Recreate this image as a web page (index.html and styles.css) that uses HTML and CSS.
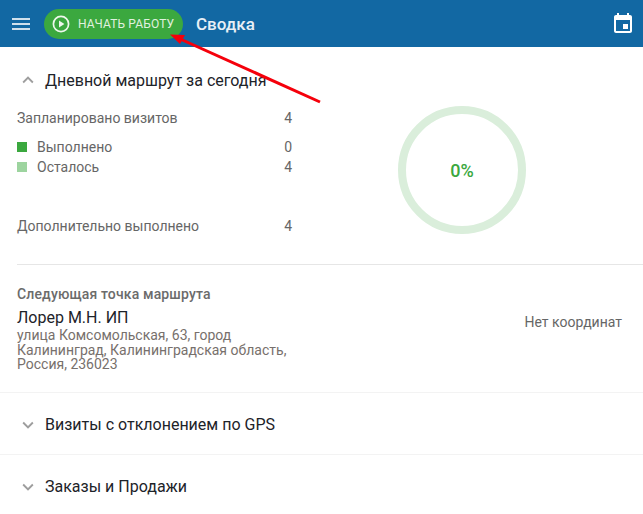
FILE: index.html
```html
<!DOCTYPE html>
<html lang="ru">
<head>
<meta charset="utf-8">
<title>Сводка</title>
<link rel="stylesheet" href="styles.css">
</head>
<body>
<header class="bar">
  <svg class="menu" width="24" height="24" viewBox="0 0 24 24"><path d="M3 6h18v2H3zM3 11h18v2H3zM3 16h18v2H3z" fill="#cfe0ec"/></svg>
  <div class="start">
    <svg width="20" height="20" viewBox="0 0 20 20"><circle cx="10" cy="10" r="7.6" fill="none" stroke="#eef7ec" stroke-width="1.7"/><path d="M8 6.4v7.2l5.4-3.6z" fill="#eef7ec"/></svg>
    <span>НАЧАТЬ РАБОТУ</span>
  </div>
  <h1>Сводка</h1>
  <svg class="cal" width="24" height="24" viewBox="0 0 24 24"><path fill="#fff" d="M19 3h-1V1h-2v2H8V1H6v2H5c-1.1 0-2 .9-2 2v14c0 1.1.9 2 2 2h14c1.1 0 2-.9 2-2V5c0-1.1-.9-2-2-2zm0 16H5V8h14v11z"/><path fill="#fff" d="M12 12h5v5h-5z"/></svg>
</header>
<main>
  <section class="daily">
    <div class="head first">
      <svg width="24" height="24" viewBox="0 0 24 24"><path d="M7.41 15.41 12 10.83l4.59 4.58L18 14l-6-6-6 6z" fill="#9e9e9e"/></svg>
      <h2>Дневной маршрут за сегодня</h2>
    </div>
    <div class="summary">
      <div class="stats">
        <div class="row"><span>Запланировано визитов</span><span>4</span></div>
        <div class="legend">
          <div class="row"><span class="key"><i class="sq done"></i>Выполнено</span><span>0</span></div>
          <div class="row"><span class="key"><i class="sq left"></i>Осталось</span><span>4</span></div>
        </div>
        <div class="row extra"><span>Дополнительно выполнено</span><span>4</span></div>
      </div>
      <div class="ring"><span>0%</span></div>
    </div>
    <div class="next">
      <h3>Следующая точка маршрута</h3>
      <div class="point">
        <div class="info">
          <div class="name">Лорер М.Н. ИП</div>
          <div class="addr">улица Комсомольская, 63, город Калининград, Калининградская область, Россия, 236023</div>
        </div>
        <div class="nocoord">Нет координат</div>
      </div>
    </div>
  </section>
  <section class="head fold">
    <svg width="24" height="24" viewBox="0 0 24 24"><path d="M7.41 8.59 12 13.17l4.59-4.58L18 10l-6 6-6-6z" fill="#9e9e9e"/></svg>
    <h2>Визиты с отклонением по GPS</h2>
  </section>
  <section class="head fold">
    <svg width="24" height="24" viewBox="0 0 24 24"><path d="M7.41 8.59 12 13.17l4.59-4.58L18 10l-6 6-6-6z" fill="#9e9e9e"/></svg>
    <h2>Заказы и Продажи</h2>
  </section>
</main>
<svg class="arrow" width="643" height="514" viewBox="0 0 643 514"><path d="M320 102 178 38" stroke="#f5000b" stroke-width="3" fill="none"/><path d="M170 34.500 185 35 180 44z" fill="#f5000b"/></svg>
</body>
</html>
```
FILE: styles.css
```css
* { box-sizing: border-box; }
html, body { margin: 0; height: 100%; overflow: hidden; }
body { font-family: Roboto, "Liberation Sans", sans-serif; background: #fff; color: #666; position: relative; }
.bar { height: 47px; background: #1268a3; display: flex; align-items: center; padding: 0 8px 0 9px; }
.menu { flex: none; }
.start { margin-left: 11px; width: 139px; height: 30px; border-radius: 15px; background: #3ba83f; display: flex; align-items: center; gap: 7px; padding-left: 7px; color: #e0f1df; font-size: 12px; letter-spacing: .15px; }
.bar h1 { margin: 0 0 0 13px; font-size: 17px; font-weight: 500; color: #e8f0f6; }
.cal { margin-left: auto; }
.head { display: flex; align-items: center; gap: 6px; padding-left: 17px; }
.head svg { flex: none; width: 22px; height: 22px; }
.head h2 { margin: 0; font-size: 16px; font-weight: 400; color: #1d2329; }
.first { height: 66px; }
.fold { height: 62px; border-top: 1px solid #f3f3f3; padding-top: 2px; }
.summary { display: flex; align-items: flex-start; margin-top: -4px; }
.stats { width: 275px; margin: -1px 0 0 17px; font-size: 14px; }
.row { display: flex; justify-content: space-between; height: 20px; line-height: 20px; }
.legend { margin-top: 9px; }
.key { display: flex; align-items: center; }
.sq { width: 10px; height: 10px; margin-right: 10px; }
.done { background: #3ba83f; }
.left { background: #9dd49f; }
.extra { margin-top: 39px; }
.ring { width: 128px; height: 128px; margin: -3px 0 0 106px; border: 8px solid #daeedb; border-radius: 50%; display: flex; align-items: center; justify-content: center; color: #3ba83f; font-size: 18px; font-weight: 500; }
.next { margin: 28px 0 0 17px; border-top: 1px solid #e6e6e6; padding: 22px 21px 0 0; height: 128px; }
.next h3 { margin: 0; font-size: 14px; line-height: 15px; font-weight: 500; color: #6b6b6b; letter-spacing: .15px; }
.point { display: flex; justify-content: space-between; margin-top: 6px; }
.info { width: 290px; }
.name { font-size: 16px; line-height: 20px; color: #1d2329; }
.addr { font-size: 14px; line-height: 14.500px; color: #77706c; }
.nocoord { font-size: 14px; line-height: 16px; margin-top: 6px; }
.arrow { position: absolute; left: 0; top: 0; pointer-events: none; }
```
